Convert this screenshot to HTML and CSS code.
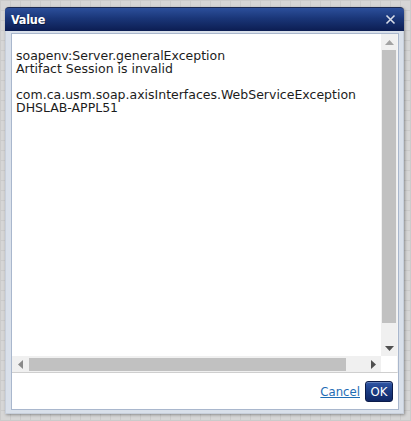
FILE: index.html
```html
<!DOCTYPE html>
<html>
<head>
<meta charset="utf-8">
<link rel="stylesheet" href="styles.css">
</head>
<body>
<div class="dialog">
  <div class="titlebar">
    <span class="title">Value</span>
    <svg class="close" width="11" height="11" viewBox="0 0 11 11"><path d="M1.5 1.5 L9.5 9.5 M9.5 1.5 L1.5 9.5" stroke="#d9dde8" stroke-width="1.6" fill="none"/></svg>
  </div>
  <div class="frame">
    <div class="inner">
      <div class="textarea">
        <div class="text">
soapenv:Server.generalException
Artifact Session is invalid

com.ca.usm.soap.axisInterfaces.WebServiceException
DHSLAB-APPL51</div>
        <div class="vscroll">
          <div class="arrow-btn"><svg width="9" height="5" viewBox="0 0 9 5"><path d="M4.5 0 L9 5 L0 5 Z" fill="#a3a3a3"/></svg></div>
          <div class="vthumb"></div>
          <div class="vspace"></div>
          <div class="arrow-btn"><svg width="9" height="5" viewBox="0 0 9 5"><path d="M0 0 L9 0 L4.5 5 Z" fill="#505050"/></svg></div>
        </div>
        <div class="hscroll">
          <div class="arrow-btn"><svg width="5" height="9" viewBox="0 0 5 9"><path d="M5 0 L5 9 L0 4.5 Z" fill="#8a8a8a"/></svg></div>
          <div class="hthumb"></div>
          <div class="hspace"></div>
          <div class="arrow-btn"><svg width="5" height="9" viewBox="0 0 5 9"><path d="M0 0 L5 4.5 L0 9 Z" fill="#505050"/></svg></div>
        </div>
        <div class="corner"></div>
      </div>
      <div class="buttons">
        <a class="cancel" href="#">Cancel</a>
        <button class="ok">OK</button>
      </div>
    </div>
  </div>
</div>
</body>
</html>
```

FILE: styles.css
```css
html, body {
  margin: 0;
  padding: 0;
}
body {
  width: 411px;
  height: 421px;
  overflow: hidden;
  background-color: #d6d6d6;
  background-image:
    repeating-linear-gradient(90deg, #cbcbcb 0 1px, transparent 1px 10px),
    repeating-linear-gradient(0deg, #cbcbcb 0 1px, transparent 1px 10px);
  padding: 7px 0 0 5px;
  box-sizing: border-box;
  font-family: "DejaVu Sans", sans-serif;
}
.dialog {
  width: 399px;
  height: 407px;
  display: flex;
  flex-direction: column;
  border-radius: 4px 4px 0 0;
  box-shadow: 1px 1px 3px rgba(0, 0, 0, 0.35);
}
.titlebar {
  height: 24px;
  flex: none;
  box-sizing: border-box;
  border-top: 1px solid #1b2a52;
  border-radius: 4px 4px 0 0;
  background: linear-gradient(#2c4f9b, #1a3678 45%, #0c1d52);
  display: flex;
  align-items: center;
  justify-content: space-between;
  padding: 0 8px 0 6px;
}
.title {
  color: #fff;
  font-family: "DejaVu Sans", sans-serif;
  font-stretch: condensed;
  font-weight: bold;
  font-size: 12.5px;
  letter-spacing: -0.2px;
  text-shadow: 1px 1px 0 rgba(0,0,0,0.4);
}
.close {
  display: block;
}
.frame {
  flex: 1;
  display: flex;
  background: #d9e0ea;
  border: 1px solid #c7cfdb;
  border-top: none;
  padding: 2px 4px 3px 5px;
}
.inner {
  flex: 1;
  display: flex;
  flex-direction: column;
  background: #fff;
  border: 1px solid #a9b7cd;
}
.textarea {
  height: 338px;
  flex: none;
  display: grid;
  grid-template-columns: 1fr 16px;
  grid-template-rows: 1fr 16px;
  border-bottom: 1px solid #cfcfcf;
  border-right: 1px solid #f4f4f4;
}
.text {
  white-space: pre;
  overflow: hidden;
  padding: 2px 4px;
  font-family: "DejaVu Sans", sans-serif;
  font-size: 12.5px;
  line-height: 13px;
  color: #1c1c1c;
}
.vscroll {
  background: #f0f0f0;
  display: flex;
  flex-direction: column;
}
.hscroll {
  background: #f0f0f0;
  display: flex;
}
.arrow-btn {
  width: 16px;
  height: 16px;
  flex: none;
  display: flex;
  align-items: center;
  justify-content: center;
}
.vthumb {
  height: 273px;
  margin: 0 1px;
  background: #c1c1c1;
}
.vspace { flex: 1; }
.hthumb {
  width: 317px;
  margin: 2px 0 1px 1px;
  background: #c1c1c1;
}
.hspace { flex: 1; }
.corner {
  background: #fff;
}
.buttons {
  flex: 1;
  display: flex;
  align-items: center;
  justify-content: flex-end;
  gap: 5px;
  padding: 0 5px 0 0;
}
.cancel {
  color: #1f6db5;
  font-family: "DejaVu Sans", sans-serif;
  font-stretch: condensed;
  font-size: 13px;
  text-decoration: underline;
}
.ok {
  width: 28px;
  height: 21px;
  padding: 0;
  border: 1px solid #0b1b4a;
  border-radius: 3px;
  background: linear-gradient(#2f56a6, #1a3a82 50%, #0f2766);
  color: #fff;
  font-family: "DejaVu Sans", sans-serif;
  font-stretch: condensed;
  font-size: 13px;
  box-shadow: inset 0 1px 0 rgba(255,255,255,0.25);
}
```
